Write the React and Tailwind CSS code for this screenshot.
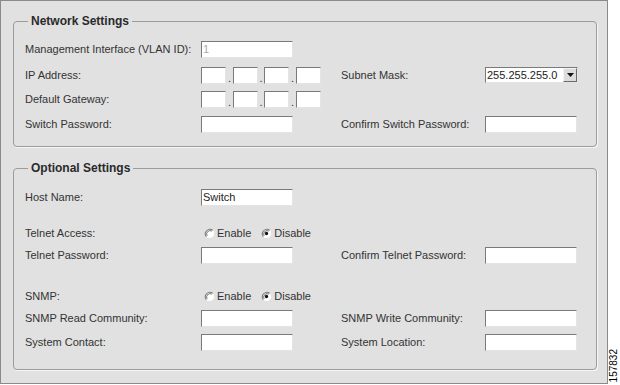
import React from "react";

const font = { fontFamily: '"Liberation Sans", Arial, sans-serif' };

function TextBox({ value = "", w = "w-[92px]", gray = false }) {
  return (
    <div
      className={`${w} h-[17px] bg-white border border-t-[#7a7a7a] border-l-[#7a7a7a] border-r-[#e4e4e4] border-b-[#e4e4e4] flex items-center pl-[1px] text-[11px] leading-none ${gray ? "text-[#a8a8a8]" : "text-[#222]"}`}
    >
      {value}
    </div>
  );
}

function IpBoxes() {
  const Dot = ({ w }) => (
    <div className={`${w} h-[17px] flex items-end justify-center text-[11px] leading-[11px] text-[#333]`}>.</div>
  );
  return (
    <div className="flex items-center">
      <TextBox w="w-[25px]" />
      <Dot w="w-[7px]" />
      <TextBox w="w-[25px]" />
      <Dot w="w-[6px]" />
      <TextBox w="w-[25px]" />
      <Dot w="w-[7px]" />
      <TextBox w="w-[25px]" />
    </div>
  );
}

function Radio({ checked }) {
  return (
    <svg width="11" height="11" viewBox="0 0 12 12">
      <circle cx="6" cy="6" r="5" fill="#ffffff" />
      <path d="M9.5 2.5 A5 5 0 0 0 2.5 9.5" fill="none" stroke="#7a7a7a" strokeWidth="1.2" />
      <path d="M8.6 3.4 A3.8 3.8 0 0 0 3.4 8.6" fill="none" stroke="#404040" strokeWidth="0.8" />
      {checked && <circle cx="6" cy="6" r="1.8" fill="#111" />}
    </svg>
  );
}

function RadioPair() {
  return (
    <div className="flex items-center text-[11px] text-[#333]">
      <div className="ml-[3px] flex items-center gap-[2px]">
        <Radio />
        <span>Enable</span>
      </div>
      <div className="ml-[10px] flex items-center gap-[2px]">
        <Radio checked />
        <span>Disable</span>
      </div>
    </div>
  );
}

function Select() {
  return (
    <div className="w-[93px] h-[16px] bg-white border border-t-[#7a7a7a] border-l-[#7a7a7a] border-r-[#e4e4e4] border-b-[#e4e4e4] flex items-center justify-between text-[11px] text-[#222]">
      <span className="pl-[1px] leading-none">255.255.255.0</span>
      <div className="w-[14px] h-[14px] bg-[#dcdcdc] border border-t-[#f4f4f4] border-l-[#f4f4f4] border-r-[#6a6a6a] border-b-[#6a6a6a] flex items-center justify-center">
        <svg width="7" height="4" viewBox="0 0 7 4">
          <path d="M0 0 L7 0 L3.5 4 Z" fill="#111" />
        </svg>
      </div>
    </div>
  );
}

function Row({ mt, label, field, rlabel, rfield }) {
  return (
    <div className={`${mt} h-[20px] flex items-center text-[11px] text-[#333]`}>
      <div className="w-[176px] shrink-0">{label}</div>
      <div className="w-[140px] shrink-0">{field}</div>
      {rlabel && <div className="w-[144px] shrink-0">{rlabel}</div>}
      {rfield}
    </div>
  );
}

function Group({ title, mt, h, children }) {
  return (
    <div
      className={`${mt} ${h} ml-[12px] w-[584px] relative border border-[#9c9c9c] rounded-[4px] shadow-[1px_1px_0_#f7f7f7] pl-[11px]`}
    >
      <div className="absolute left-[14px] top-[-8px] px-[3px] bg-[#e1e1e1] text-[12px] font-bold text-[#2a2a2a] leading-[14px]">
        {title}
      </div>
      {children}
    </div>
  );
}

export default function App() {
  return (
    <div className="w-[620px] h-[385px] bg-white flex" style={font}>
      <div className="w-[608px] h-[384px] bg-[#e1e1e1] border border-[#8a8a8a] flex flex-col">
        <Group title="Network Settings" mt="mt-[20px]" h="h-[126px]">
          <Row mt="mt-[17px]" label="Management Interface (VLAN ID):" field={<TextBox value="1" gray />} />
          <Row
            mt="mt-[6px]"
            label="IP Address:"
            field={<IpBoxes />}
            rlabel="Subnet Mask:"
            rfield={<Select />}
          />
          <Row mt="mt-[4px]" label="Default Gateway:" field={<IpBoxes />} />
          <Row
            mt="mt-[5px]"
            label="Switch Password:"
            field={<TextBox />}
            rlabel="Confirm Switch Password:"
            rfield={<TextBox />}
          />
        </Group>
        <Group title="Optional Settings" mt="mt-[21px]" h="h-[202px]">
          <Row mt="mt-[18px]" label="Host Name:" field={<TextBox value="Switch" />} />
          <Row mt="mt-[16px]" label="Telnet Access:" field={<RadioPair />} />
          <Row
            mt="mt-[2px]"
            label="Telnet Password:"
            field={<TextBox />}
            rlabel="Confirm Telnet Password:"
            rfield={<TextBox />}
          />
          <Row mt="mt-[21px]" label="SNMP:" field={<RadioPair />} />
          <Row
            mt="mt-[2px]"
            label="SNMP Read Community:"
            field={<TextBox />}
            rlabel="SNMP Write Community:"
            rfield={<TextBox />}
          />
          <Row
            mt="mt-[4px]"
            label="System Contact:"
            field={<TextBox />}
            rlabel="System Location:"
            rfield={<TextBox />}
          />
        </Group>
      </div>
      <div className="flex-1 flex flex-col justify-end items-center pb-[3px]">
        <div className="text-[10px] leading-none text-black [writing-mode:vertical-rl] rotate-180">157832</div>
      </div>
    </div>
  );
}
